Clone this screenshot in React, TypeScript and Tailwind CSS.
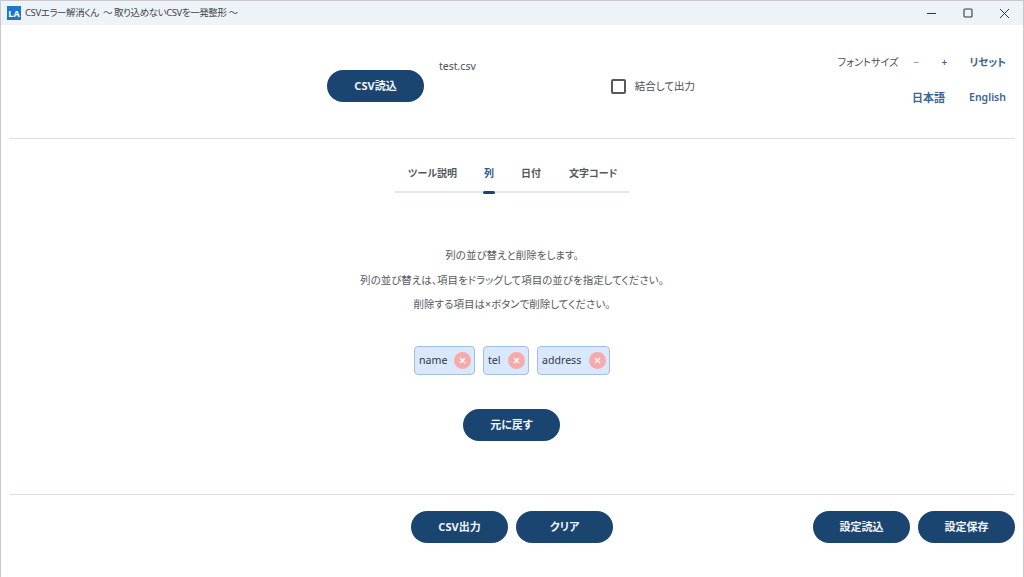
import React from "react";

const font = { fontFamily: '"Noto Sans","Noto Sans CJK JP",sans-serif' };

function Btn({ children, className = "" }: { children: React.ReactNode; className?: string }) {
  return (
    <button className={`w-[97px] h-[32px] pt-[1px] rounded-full bg-[#1a4570] text-[#f2f5f8] text-[11px] font-bold flex items-center justify-center [font-feature-settings:'palt'] ${className}`}>
      {children}
    </button>
  );
}

function Chip({ label, w }: { label: string; w: string }) {
  return (
    <div className={`${w} h-[29px] rounded-[4px] border border-[#a3bde3] bg-[#d8e8fd] flex items-center justify-between pl-[4px] pr-[3px]`}>
      <span className="text-[10.6px] text-[#33383d] pt-[1px]">{label}</span>
      <span className="w-[17px] h-[17px] rounded-full bg-[#f8a9aa] flex items-center justify-center">
        <svg width="7" height="7" viewBox="0 0 7 7" fill="none" stroke="#fff" strokeWidth="1.3">
          <path d="M1 1l5 5M6 1L1 6" />
        </svg>
      </span>
    </div>
  );
}

export default function App() {
  return (
    <div style={font} className="w-[1024px] h-[577px] bg-white flex flex-col overflow-hidden text-[#4a4f54] border-l border-r border-[#c9c9c9] [font-feature-settings:'palt']">
      {/* Title bar */}
      <div className="h-[25px] shrink-0 bg-[#eef3f9] flex items-center pl-[6px] border-t border-[#c8c8c8]">
        <div className="w-[14px] h-[14px] bg-[#1c78c4] text-white text-[9px] font-bold flex items-center justify-center leading-none">LA</div>
        <span className="ml-[4px] text-[9.5px] tracking-[-0.42px] text-[#3f4347] whitespace-pre">CSVエラー解消くん  〜 取り込めないCSVを一発整形 〜</span>
        <div className="ml-auto flex items-center pr-[8px] text-[#33373b]">
          <svg className="mr-[27px]" width="9" height="10" viewBox="0 0 9 10" fill="none" stroke="currentColor" strokeWidth="1"><path d="M0 5.5h9" /></svg>
          <svg className="mr-[26px]" width="10" height="10" viewBox="0 0 10 10" fill="none" stroke="currentColor" strokeWidth="1.1"><rect x="1" y="1" width="8" height="8" rx="1" /></svg>
          <svg className="mr-[5px]" width="11" height="11" viewBox="0 0 11 11" fill="none" stroke="currentColor" strokeWidth="1"><path d="M1 1l9 9M10 1l-9 9" /></svg>
        </div>
      </div>

      {/* Header */}
      <div className="mx-[8px] h-[114px] shrink-0 border-b border-[#dcdfe1] flex relative">
        <div className="ml-[318px] mt-[45px]">
          <Btn>CSV読込</Btn>
        </div>
        <span className="ml-[15px] mt-[33px] text-[10.5px] leading-[16px] h-[16px]">test.csv</span>
        <div className="ml-[135px] mt-[53px] h-[16px] flex items-center">
          <span className="w-[15px] h-[15px] rounded-[2px] border-2 border-[#55595d]" />
          <span className="ml-[9px] text-[10.5px] pt-[1px]">結合して出力</span>
        </div>
        <div className="ml-auto pr-[9px] flex flex-col items-end">
          <div className="mt-[30px] h-[16px] flex items-center text-[10.2px]">
            <span>フォントサイズ</span>
            <span className="ml-[15px] text-[#7b8085]">−</span>
            <span className="ml-[22px] font-semibold text-[#3d6590]">+</span>
            <span className="ml-[22px] text-[10.5px] text-[#3d6590] font-semibold">リセット</span>
          </div>
          <div className="mt-[19px] h-[16px] flex items-center text-[11px] font-semibold text-[#3d6590]">
            <span>日本語</span>
            <span className="ml-[24px] text-[10.5px]">English</span>
          </div>
        </div>
      </div>

      {/* Tabs */}
      <div className="mt-[26px] self-center w-[234px] h-[28px] shrink-0 border-b-2 border-[#e4e7ea] flex text-[10px] font-semibold text-[#54585c]">
        <span className="ml-[13px] mt-[1px]">ツール説明</span>
        <span className="ml-[26px] mt-[1px] w-[12px] text-center relative h-[27px] text-[#2e5a88]">
          列
          <span className="absolute left-0 top-[25px] w-[12px] h-[3px] rounded-full bg-[#1a4570]" />
        </span>
        <span className="ml-[26px] mt-[1px]">日付</span>
        <span className="ml-[28px] mt-[1px]">文字コード</span>
      </div>

      {/* Description */}
      <div className="mt-[50px] text-center text-[10.5px] leading-[24.5px] text-[#55595d]">
        <p>列の並び替えと削除をします。</p>
        <p>列の並び替えは、項目をドラッグして項目の並びを指定してください。</p>
        <p>削除する項目は×ボタンで削除してください。</p>
      </div>

      {/* Chips */}
      <div className="mt-[29px] flex justify-center gap-[8px]">
        <Chip label="name" w="w-[61px]" />
        <Chip label="tel" w="w-[46px]" />
        <Chip label="address" w="w-[73px]" />
      </div>

      <div className="mt-[34px] pr-[1px] flex justify-center">
        <Btn>元に戻す</Btn>
      </div>

      {/* Footer */}
      <div className="mt-[53px] mx-[8px] border-t border-[#dcdfe1] pt-[16px] grid grid-cols-[1fr_auto_1fr]">
        <div />
        <div className="flex gap-[8px]">
          <Btn>CSV出力</Btn>
          <Btn>クリア</Btn>
        </div>
        <div className="flex justify-end gap-[8px]">
          <Btn>設定読込</Btn>
          <Btn>設定保存</Btn>
        </div>
      </div>
    </div>
  );
}
